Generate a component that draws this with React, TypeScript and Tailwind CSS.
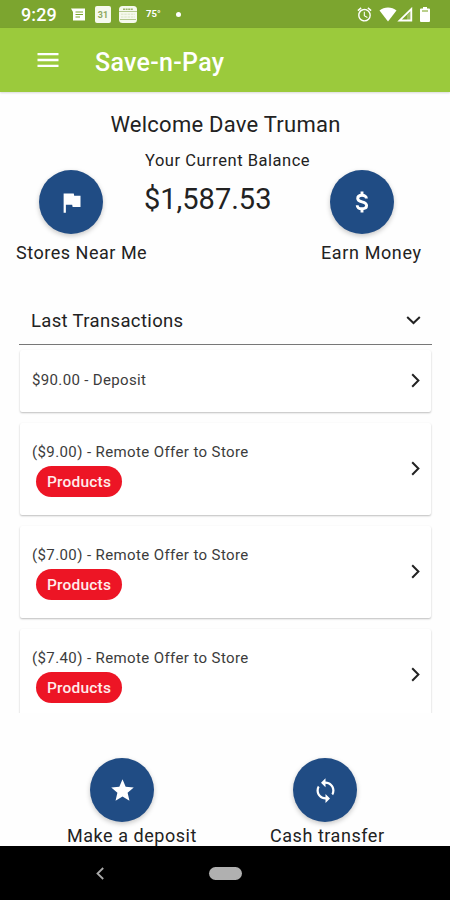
import type { ReactNode } from 'react';
import { MdAlarm, MdFlag, MdMenu, MdStar, MdSync } from 'react-icons/md';

function StatusBar() {
  return (
    <div className="flex h-7 shrink-0 items-center bg-[#7ca52f] pl-[21px] pr-[20px] text-white">
      <span className="w-[50px] pt-[2px] text-[18px] font-medium leading-7 tracking-[0.1px]">9:29</span>
      <svg className="h-[13px] w-[15px]" viewBox="0 0 15 13">
        <path d="M0 0.5H14V12.5H2V4Z" fill="currentColor" />
        <path d="M4.5 4H12M4.5 6.5H12M4.5 9H9" stroke="#7ca52f" strokeWidth="1" />
      </svg>
      <div className="ml-[9px] flex h-[17px] w-4 flex-col items-center rounded-[2px] bg-[#f6f9ee] pt-[4px] text-[9px] font-bold leading-[10px] text-[#8fa861]">
        31
      </div>
      <svg className="ml-2 h-[17px] w-[18px]" viewBox="0 0 18 17">
        <rect width="18" height="17" rx="3.5" fill="#f6f9ee" />
        <path d="M0 5.5H18M1 13.5H17" stroke="#a3bb74" strokeWidth="0.8" />
        <path d="M2 8.2H16M2 11H16" stroke="#d3dfba" strokeWidth="0.8" strokeDasharray="2.5 0.8" />
        <path d="M4 3.2H14" stroke="#9bb46a" strokeWidth="1.6" strokeDasharray="2 0.6" />
      </svg>
      <span className="ml-[9px] w-[30px] text-[9.5px] font-bold leading-7">75°</span>
      <span className="size-[5px] rounded-full bg-white" />
      <MdAlarm className="ml-auto size-[17px]" />
      <svg className="ml-[6px] h-[15px] w-[18px]" viewBox="0 0 18 15">
        <path d="M0.5 3.5C5 -0.6 13 -0.6 17.5 3.5L9 14.5Z" fill="currentColor" />
      </svg>
      <svg className="h-[15px] w-4" viewBox="0 0 16 15">
        <path d="M2.5 13.5H14.3V2Z" fill="none" stroke="currentColor" strokeWidth="1.8" />
        <path d="M10 13V8L14 4V13Z" fill="currentColor" opacity="0.25" />
      </svg>
      <svg className="ml-[7px] h-[15px] w-[10px]" viewBox="0 0 10 15">
        <path d="M3 0H7V1.5H9Q10 1.5 10 2.5V14Q10 15 9 15H1Q0 15 0 14V2.5Q0 1.5 1 1.5H3Z" fill="currentColor" />
        <path d="M2 4H8" stroke="#a9c46f" strokeWidth="1.6" />
      </svg>
    </div>
  );
}

function RoundButton({ children, className = '' }: { children: ReactNode; className?: string }) {
  return (
    <button
      className={`flex size-16 items-center justify-center rounded-full bg-[#204c84] text-[27px] text-white shadow-[0_2px_5px_rgba(0,0,0,0.22)] ${className}`}
    >
      {children}
    </button>
  );
}

function DollarIcon() {
  return (
    <svg className="h-[22px] w-[14px]" viewBox="0 0 14 22" fill="none" stroke="currentColor" strokeWidth="2.9">
      <path d="M11.4 7.6C11.4 5.5 9.6 4.3 7 4.3C4.4 4.3 2.7 5.5 2.7 7.4C2.7 9.5 4.5 10.2 7 10.9C9.7 11.6 11.6 12.4 11.6 14.6C11.6 16.7 9.7 17.8 7 17.8C4.2 17.8 2.3 16.5 2.2 14.2" />
      <path d="M7 0.6V4.5M7 17.5V21.4" />
    </svg>
  );
}

function Chevron({ down = false }: { down?: boolean }) {
  return (
    <svg
      className={down ? 'h-[9px] w-[15px]' : 'mb-px h-[15px] w-[9px]'}
      viewBox={down ? '0 0 15 9' : '0 0 9 15'}
      fill="none"
      stroke="#222"
      strokeWidth="2"
    >
      <path d={down ? 'M1.2 1L7.5 7L13.8 1' : 'M1.2 1.2L7.4 7.5L1.2 13.8'} />
    </svg>
  );
}

const card = 'flex shrink-0 items-center justify-between rounded-[2px] bg-white pl-[12px] pr-[11px] shadow-[0_1px_2px_rgba(0,0,0,0.26)]';

function Transaction({ amount }: { amount: string }) {
  return (
    <div className={`${card} h-[92px]`}>
      <div className="flex flex-col items-start">
        <span className="text-[15px] leading-5 tracking-[0.39px] text-[#3c3c3c]">{amount} - Remote Offer to Store</span>
        <span className="ml-[4px] mt-[4px] h-[31px] w-[86px] rounded-full bg-[#ed1525] text-center text-[15.5px] font-medium leading-[33px] tracking-[0.2px] text-[#ffecec]">
          Products
        </span>
      </div>
      <Chevron />
    </div>
  );
}

export default function App() {
  return (
    <div className="flex h-[900px] w-[450px] flex-col overflow-hidden bg-[#fefefe] font-[Roboto,sans-serif] text-[#222]">
      <StatusBar />
      <header className="flex h-16 shrink-0 items-center bg-[#9bca3c] pl-[34px] text-white shadow-[0_1px_2px_rgba(0,0,0,0.15)]">
        <MdMenu className="size-7" />
        <h1 className="ml-[33px] pt-[5px] text-[25px] font-medium leading-8 tracking-[0.3px]">Save-n-Pay</h1>
      </header>

      <section className="h-[205px] shrink-0">
        <h2 className="pl-[1px] pt-[18px] text-center text-[22px] leading-[30px] tracking-[0.25px]">Welcome Dave Truman</h2>
        <div className="mt-[8px] flex pl-[16px]">
          <div className="w-[128px] pt-[22px]">
            <RoundButton className="ml-[23px]">
              <MdFlag />
            </RoundButton>
            <p className="mt-[8px] whitespace-nowrap text-[18px] leading-[22px] tracking-[0.52px]">Stores Near Me</p>
          </div>
          <div className="w-[177px] pl-px">
            <p className="whitespace-nowrap pt-px text-[16.5px] leading-6 tracking-[0.53px]">Your Current Balance</p>
            <p className="-ml-px mt-[9px] text-[29px] leading-[34px]">$1,587.53</p>
          </div>
          <div className="pt-[22px]">
            <RoundButton className="ml-[9px]">
              <DollarIcon />
            </RoundButton>
            <p className="mt-[8px] text-[18px] leading-[22px] tracking-[0.62px]">Earn Money</p>
          </div>
        </div>
      </section>

      <section className="ml-[19px] mr-[18px] flex h-[416px] shrink-0 flex-col">
        <div className="flex h-[48px] shrink-0 items-center justify-between border-b-[1.5px] border-[#777] pl-[12px] pr-[11px]">
          <h3 className="text-[18.5px] leading-6 tracking-[0.35px]">Last Transactions</h3>
          <Chevron down />
        </div>
        <div className="-mx-[3px] flex grow flex-col gap-[11px] overflow-hidden px-[4px] pt-[5px]">
          <div className={`${card} h-[62px]`}>
            <span className="pb-[2px] text-[15px] leading-5 tracking-[0.35px] text-[#3c3c3c]">$90.00 - Deposit</span>
            <Chevron />
          </div>
          <Transaction amount="($9.00)" />
          <Transaction amount="($7.00)" />
          <Transaction amount="($7.40)" />
        </div>
      </section>

      <footer className="flex h-[133px] shrink-0 overflow-hidden pl-[67px] pt-[45px]">
        <div className="w-[203px]">
          <RoundButton className="ml-[23px]">
            <MdStar />
          </RoundButton>
          <p className="mt-[3px] text-[18px] leading-[22px] tracking-[0.54px]">Make a deposit</p>
        </div>
        <div>
          <RoundButton className="ml-[23px]">
            <MdSync />
          </RoundButton>
          <p className="mt-[3px] text-[18px] leading-[22px] tracking-[0.54px]">Cash transfer</p>
        </div>
      </footer>

      <nav className="flex h-[54px] shrink-0 items-center bg-black pl-[96px]">
        <svg className="h-[13px] w-2" viewBox="0 0 8 13" fill="none" stroke="#aaa" strokeWidth="1.8">
          <path d="M7.2 1L1.5 6.5L7.2 12" />
        </svg>
        <span className="ml-[105px] h-[13px] w-[33px] rounded-full bg-[#b0b0b0]" />
      </nav>
    </div>
  );
}
